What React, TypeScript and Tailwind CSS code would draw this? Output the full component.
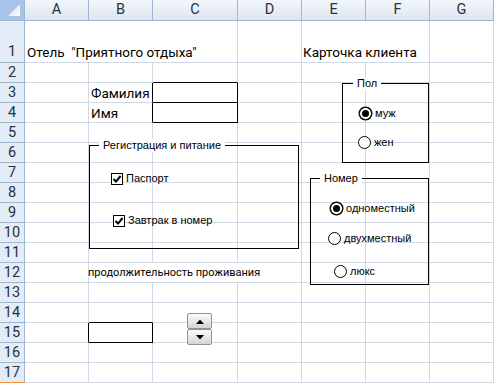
import React from "react";

const COLS = ["A", "B", "C", "D", "E", "F", "G"];

type Cell = { col: number; span?: number; text?: string; className?: string };

// cells with text or a span; everything else is an empty grid cell
const CELLS: Record<number, Cell[]> = {
  1: [
    { col: 0, span: 3, text: 'Отель  "Приятного отдыха"', className: "pl-[2px] pb-[1px]" },
    { col: 4, span: 2, text: "Карточка клиента", className: "pl-[1px] pb-[1px]" },
  ],
  3: [{ col: 1, text: "Фамилия", className: "pl-[2px]" }],
  4: [{ col: 1, text: "Имя", className: "pl-[2px]" }],
  12: [
    {
      col: 1,
      span: 3,
      text: "продолжительность проживания",
      className: "ml-[-1px] text-[11px]",
    },
  ],
};

// cells drawn with a black right or bottom edge (the thick boxes)
const BLACK_RIGHT = new Set(["3-1", "4-1", "3-2", "4-2", "15-0", "15-1"]);
const BLACK_BOTTOM = new Set(["2-2", "3-2", "4-2", "14-1", "15-1"]);

function buildRow(r: number) {
  const given = CELLS[r] || [];
  const out: Cell[] = [];
  let c = 0;
  while (c < COLS.length) {
    const hit = given.find((g) => g.col === c);
    if (hit) {
      out.push(hit);
      c += hit.span || 1;
    } else {
      out.push({ col: c });
      c += 1;
    }
  }
  return out;
}

function GroupBox({
  label,
  className,
  labelLeft,
  children,
}: {
  label: string;
  className: string;
  labelLeft: string;
  children: React.ReactNode;
}) {
  return (
    <div className={`absolute border border-black flex flex-col items-start ${className}`}>
      <span
        className={`absolute top-[-7px] ${labelLeft} bg-white px-[4px] text-[11px] leading-[13px] text-black`}
      >
        {label}
      </span>
      {children}
    </div>
  );
}

function Check({ label, className = "" }: { label: string; className?: string }) {
  return (
    <div className={`flex items-center gap-[3px] ${className}`}>
      <span className="w-3 h-3 border border-black bg-white flex items-center justify-center">
        <svg width="10" height="10" viewBox="0 0 10 10">
          <path d="M1.5 5 L4 7.6 L8.6 2" fill="none" stroke="black" strokeWidth="2" />
        </svg>
      </span>
      <span className="text-[11px] leading-[13px] text-black">{label}</span>
    </div>
  );
}

function Radio({ label, on, className = "" }: { label: string; on?: boolean; className?: string }) {
  return (
    <div className={`flex items-center gap-[3px] ${className}`}>
      <span
        className={`w-[13px] h-[13px] rounded-full border border-black bg-white flex items-center justify-center ${
          on ? "ring-[0.5px] ring-black" : ""
        }`}
      >
        {on && <span className="w-[7px] h-[7px] rounded-full bg-black" />}
      </span>
      <span className="text-[11px] leading-[13px] text-black">{label}</span>
    </div>
  );
}

function SpinButton({ up }: { up?: boolean }) {
  return (
    <div className="w-[25px] h-[16px] rounded-[2px] border border-[#8f9396] bg-gradient-to-b from-[#fbfbfb] via-[#eaeaea] to-[#d4d4d4] flex items-center justify-center">
      <svg width="8" height="5" viewBox="0 0 8 5">
        {up ? <path d="M0 5 L4 0.5 L8 5 Z" fill="black" /> : <path d="M0 0 L4 4.5 L8 0 Z" fill="black" />}
      </svg>
    </div>
  );
}

export default function App() {
  const rows = Array.from({ length: 17 }, (_, i) => i + 1);
  return (
    <div className="relative w-[494px] h-[383px] overflow-hidden bg-white font-['Roboto',sans-serif] text-[13.5px] text-black">
      <div className="grid grid-cols-[25px_64px_64px_85px_64px_64px_64px_64px] grid-rows-[21px_42px_repeat(16,20px)]">
        {/* corner */}
        <div className="border-r border-b border-[#9eb6ce] bg-[#a9c4e9] flex items-end justify-end pr-[4px] pb-[4px]">
          <svg width="12" height="12" viewBox="0 0 12 12">
            <defs>
              <linearGradient id="tri" x1="0" y1="0" x2="1" y2="1">
                <stop offset="0" stopColor="#c9daf1" />
                <stop offset="1" stopColor="#ffffff" />
              </linearGradient>
            </defs>
            <path d="M12 0 L12 12 L0 12 Z" fill="url(#tri)" />
          </svg>
        </div>
        {COLS.map((c) => (
          <div
            key={c}
            className="border-r border-b border-[#9eb6ce] bg-gradient-to-b from-[#f3f6fb] to-[#dde6f2] flex items-center justify-center text-[14.5px] text-[#27323f] leading-none"
          >
            {c}
          </div>
        ))}

        {rows.map((r) => (
          <React.Fragment key={r}>
            <div
              className={`border-r border-b border-[#9eb6ce] bg-[#e4ecf7] flex justify-center text-[14.5px] text-[#27323f] leading-none ${
                r === 1 ? "items-end pb-[3px]" : "items-center pt-[1px]"
              } ${r === 17 ? "border-b-[#f29436]" : ""}`}
            >
              {r}
            </div>
            {buildRow(r).map((cell) => {
              const key = `${r}-${cell.col + (cell.span || 1) - 1}`;
              const right = BLACK_RIGHT.has(key) ? "border-r-black" : "border-r-[#d0d7e5]";
              const bottom = BLACK_BOTTOM.has(`${r}-${cell.col}`) ? "border-b-black" : "border-b-[#d0d7e5]";
              const span = cell.span === 3 ? "col-span-3" : cell.span === 2 ? "col-span-2" : "";
              return (
                <div
                  key={cell.col}
                  className={`border-r border-b ${right} ${bottom} ${span} flex items-end whitespace-pre leading-[18px] ${
                    cell.className || ""
                  }`}
                >
                  {cell.text}
                </div>
              );
            })}
          </React.Fragment>
        ))}
      </div>

      {/* form controls lying over the sheet */}
      <div className="font-['Liberation_Sans',sans-serif]">
        <GroupBox
          label="Регистрация и питание"
          className="left-[89px] top-[145px] w-[210px] h-[104px] pt-[26px] pl-[21px] gap-[29px]"
          labelLeft="left-[9px]"
        >
          <Check label="Паспорт" />
          <Check label="Завтрак в номер" className="ml-[2px]" />
        </GroupBox>

        <GroupBox
          label="Пол"
          className="left-[342px] top-[83px] w-[87px] h-[80px] pt-[23px] pl-[15px] gap-[16px]"
          labelLeft="left-[10px]"
        >
          <Radio label="муж" on className="ml-[1px]" />
          <Radio label="жен" />
        </GroupBox>

        <GroupBox
          label="Номер"
          className="left-[310px] top-[178px] w-[119px] h-[107px] pt-[23px] pl-[17px] gap-[17px]"
          labelLeft="left-[9px]"
        >
          <Radio label="одноместный" on className="ml-[2px]" />
          <Radio label="двухместный" />
          <Radio label="люкс" className="ml-[6px] mt-[3px]" />
        </GroupBox>

        <div className="absolute left-[187px] top-[313px] flex flex-col">
          <SpinButton up />
          <SpinButton />
        </div>
      </div>
    </div>
  );
}
